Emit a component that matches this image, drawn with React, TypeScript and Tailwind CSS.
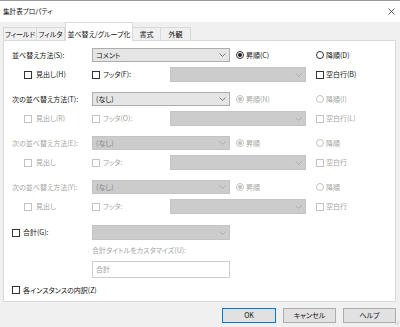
import React from "react";

const Chevron = ({ disabled }: { disabled?: boolean }) => (
  <svg width="7" height="4" viewBox="0 0 7 4" className="shrink-0">
    <polyline points="0.5,0.5 3.5,3.5 6.5,0.5" fill="none" stroke={disabled ? "#a9a9a9" : "#6a6a6a"} strokeWidth="0.9" />
  </svg>
);

const Select = ({ text, disabled, w, h }: { text?: string; disabled?: boolean; w: string; h: string }) => (
  <div
    className={`${w} ${h} flex items-center justify-between pl-[3px] pr-[3px] border ${
      disabled ? "bg-[#cccccc] border-[#c4c4c4] text-[#858585]" : "bg-[#e5e5e5] border-[#adadad] text-[#111]"
    }`}
  >
    <span className="leading-none">{text ?? ""}</span>
    <Chevron disabled={disabled} />
  </div>
);

const Check = ({ label, disabled, w, gap = "ml-[4px]" }: { label: string; disabled?: boolean; w?: string; gap?: string }) => (
  <div className={`${w ?? ""} flex items-center shrink-0`}>
    <div className={`w-[8px] h-[8px] border bg-white ${disabled ? "border-[#c2c2c2]" : "border-[#333]"}`} />
    <span className={`${gap} leading-none ${disabled ? "text-[#a3a3a3]" : "text-[#111]"}`}>{label}</span>
  </div>
);

const Radio = ({ label, disabled, checked, w }: { label: string; disabled?: boolean; checked?: boolean; w?: string }) => (
  <div className={`${w ?? ""} flex items-center shrink-0`}>
    <div
      className={`w-[8px] h-[8px] rounded-full border bg-white flex items-center justify-center ${
        disabled ? "border-[#c2c2c2]" : "border-[#333]"
      }`}
    >
      {checked && <div className={`w-[4px] h-[4px] rounded-full ${disabled ? "bg-[#c2c2c2]" : "bg-[#222]"}`} />}
    </div>
    <span className={`ml-[2px] leading-none ${disabled ? "text-[#a3a3a3]" : "text-[#111]"}`}>{label}</span>
  </div>
);

type Block = {
  label: string;
  labelDisabled?: boolean;
  select: string;
  selectDisabled?: boolean;
  asc: string;
  desc: string;
  radioDisabled?: boolean;
  head: string;
  foot: string;
  blank: string;
  rowBDisabled?: boolean;
};

const blocks: Block[] = [
  { label: "並べ替え方法(S):", select: "コメント", asc: "昇順(C)", desc: "降順(D)", head: "見出し(H)", foot: "フッタ(F):", blank: "空白行(B)" },
  { label: "次の並べ替え方法(T):", select: "(なし)", asc: "昇順(N)", desc: "降順(I)", radioDisabled: true, head: "見出し(R)", foot: "フッタ(O):", blank: "空白行(L)", rowBDisabled: true },
  { label: "次の並べ替え方法(E):", labelDisabled: true, select: "(なし)", selectDisabled: true, asc: "昇順", desc: "降順", radioDisabled: true, head: "見出し", foot: "フッタ:", blank: "空白行", rowBDisabled: true },
  { label: "次の並べ替え方法(Y):", labelDisabled: true, select: "(なし)", selectDisabled: true, asc: "昇順", desc: "降順", radioDisabled: true, head: "見出し", foot: "フッタ:", blank: "空白行", rowBDisabled: true },
];

const tabs = [
  { t: "フィールド", w: "w-[34px]" },
  { t: "フィルタ", w: "w-[29px]" },
  { t: "並べ替え/グループ化", w: "w-[68px]", active: true },
  { t: "書式", w: "w-[29px]" },
  { t: "外観", w: "w-[31px]" },
];

export default function App() {
  return (
    <div className="w-[400px] h-[327px] bg-[#f0f0f0] overflow-hidden relative text-[7px] text-[#111] font-['Noto_Sans_CJK_JP','Noto_Sans',sans-serif] [font-feature-settings:'palt']">
      {/* title bar */}
      <div className="h-[22px] bg-white border-t border-[#9a9a9a] flex items-center justify-between pl-[3px] pr-[5px]">
        <span className="text-[6.6px] leading-none text-[#111]">集計表プロパティ</span>
        <svg width="7" height="7" viewBox="0 0 7 7">
          <line x1="0.5" y1="0.5" x2="6.5" y2="6.5" stroke="#333" strokeWidth="0.8" />
          <line x1="6.5" y1="0.5" x2="0.5" y2="6.5" stroke="#333" strokeWidth="0.8" />
        </svg>
      </div>

      <div className="px-[3px] pr-[4px]">
        {/* tabs */}
        <div className="h-[18px] flex items-end">
          {tabs.map((tb) =>
            tb.active ? (
              <div
                key={tb.t}
                className={`${tb.w} h-[19px] -mb-px relative z-10 bg-white border border-b-0 border-[#d9d9d9] flex items-center justify-center pt-[4px] leading-none shrink-0`}
              >
                {tb.t}
              </div>
            ) : (
              <div
                key={tb.t}
                className={`${tb.w} h-[13px] bg-[#f0f0f0] border border-b-0 border-[#d9d9d9] -ml-px first:ml-0 flex items-center justify-center leading-none shrink-0`}
              >
                {tb.t}
              </div>
            )
          )}
        </div>

        {/* panel */}
        <div className="h-[262px] bg-white border border-[#d9d9d9] pl-[8px] pt-[7px] flex flex-col">
          {blocks.map((b, i) => (
            <div key={i} className={`flex flex-col ${i > 0 ? "mt-[10px]" : ""}`}>
              <div className="h-[14px] flex items-center">
                <div className={`w-[80px] shrink-0 leading-none ${b.labelDisabled ? "text-[#a3a3a3]" : "text-[#111]"}`}>{b.label}</div>
                <Select text={b.select} disabled={b.selectDisabled} w="w-[138px]" h="h-[14px]" />
                <div className="w-[6px] shrink-0" />
                <Radio label={b.asc} checked disabled={b.radioDisabled} w="w-[80px]" />
                <Radio label={b.desc} disabled={b.radioDisabled} />
              </div>
              <div className="h-[15px] mt-[5px] flex items-center">
                <div className="w-[12px] shrink-0" />
                <Check label={b.head} disabled={b.rowBDisabled} w="w-[68px]" />
                <Check label={b.foot} disabled={b.rowBDisabled} w="w-[78px]" gap="ml-[3px]" />
                <Select disabled w="w-[136px]" h="h-[15px]" />
                <div className="w-[10px] shrink-0" />
                <Check label={b.blank} disabled={b.rowBDisabled} gap="ml-[2px]" />
              </div>
            </div>
          ))}

          {/* total */}
          <div className="h-[15px] mt-[11px] flex items-center">
            <Check label="合計(G):" w="w-[80px]" gap="ml-[3px]" />
            <Select disabled w="w-[138px]" h="h-[15px]" />
          </div>
          <div className="h-[10px] mt-[5px] pl-[80px] flex items-center text-[#a3a3a3] leading-none">合計タイトルをカスタマイズ(U):</div>
          <div className="mt-[6px] pl-[80px]">
            <div className="w-[138px] h-[17px] border border-[#cfcfcf] bg-white flex items-center pl-[3px] text-[#9a9a9a] leading-none">合計</div>
          </div>
          <div className="h-[10px] mt-[7px] flex items-center">
            <Check label="各インスタンスの内訳(Z)" gap="ml-[3px]" />
          </div>
        </div>

        {/* buttons */}
        <div className="mt-[6px] flex justify-end gap-[7px] pr-[0px]">
          <div className="w-[54px] h-[15px] border border-[#0078d7] bg-[#e1e1e1] flex items-center justify-center leading-none">OK</div>
          <div className="w-[53px] h-[15px] border border-[#adadad] bg-[#e1e1e1] flex items-center justify-center leading-none">キャンセル</div>
          <div className="w-[53px] h-[15px] border border-[#adadad] bg-[#e1e1e1] flex items-center justify-center leading-none">ヘルプ</div>
        </div>
      </div>

      {/* resize grip */}
      <svg width="5" height="5" viewBox="0 0 5 5" className="absolute right-[1px] bottom-[1px]">
        <rect x="3.5" y="0.5" width="1" height="1" fill="#b0b0b0" />
        <rect x="1.5" y="2.5" width="1" height="1" fill="#b0b0b0" />
        <rect x="3.5" y="2.5" width="1" height="1" fill="#b0b0b0" />
      </svg>
    </div>
  );
}
